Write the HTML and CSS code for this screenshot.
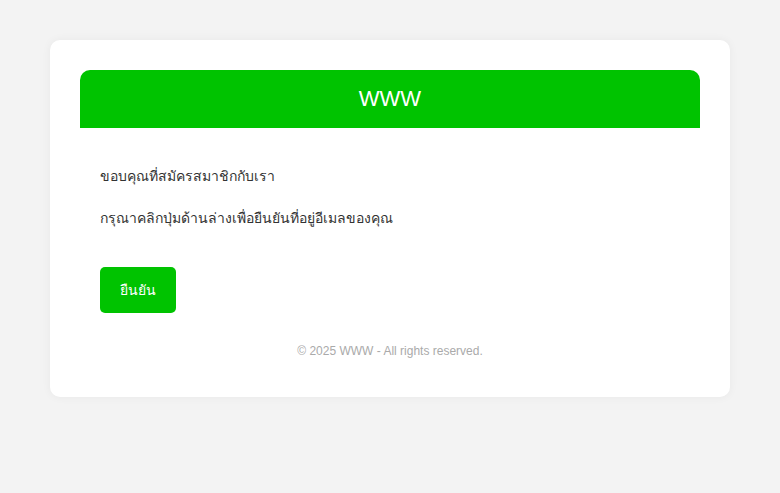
FILE: index.html
```html
<!DOCTYPE html>
<html>
  <head>
    <meta charset="utf-8">
    <link rel="stylesheet" href="styles.css">
  </head>
  <body>
    <div class="container">
      <div class="header">WWW</div>
      <div class="content">
        <p>ขอบคุณที่สมัครสมาชิกกับเรา</p>
        <p>กรุณาคลิกปุ่มด้านล่างเพื่อยืนยันที่อยู่อีเมลของคุณ</p>
        <div class="action"><a class="button" href="#">ยืนยัน</a></div>
      </div>
      <div class="footer">&copy; 2025 WWW - All rights reserved.</div>
    </div>
  </body>
</html>
```

FILE: styles.css
```css
body {
  margin: 0;
  background-color: #f3f3f3;
  font-family: "Liberation Sans", Arial, sans-serif;
  color: #333;
}

.container {
  max-width: 620px;
  margin: 40px auto;
  padding: 30px;
  background-color: #fff;
  border-radius: 10px;
  box-shadow: 0 0 10px rgba(0, 0, 0, 0.05);
}

.header {
  background-color: #00c300;
  color: #fff;
  text-align: center;
  font-size: 22px;
  line-height: 26px;
  padding: 16px 0;
  border-radius: 10px 10px 0 0;
}

.content {
  padding: 20px;
  font-size: 14px;
  line-height: 25.6px;
}

.content p {
  margin: 16px 0;
}

.action {
  padding-top: 20px;
}

.button {
  display: inline-block;
  background-color: #00c300;
  color: #fff;
  text-decoration: none;
  padding: 15px 20px;
  line-height: 16px;
  border-radius: 5px;
}

.footer {
  text-align: center;
  font-size: 12px;
  color: #aaa;
  line-height: 19px;
  margin-top: 9px;
  padding-bottom: 6px;
}
```
